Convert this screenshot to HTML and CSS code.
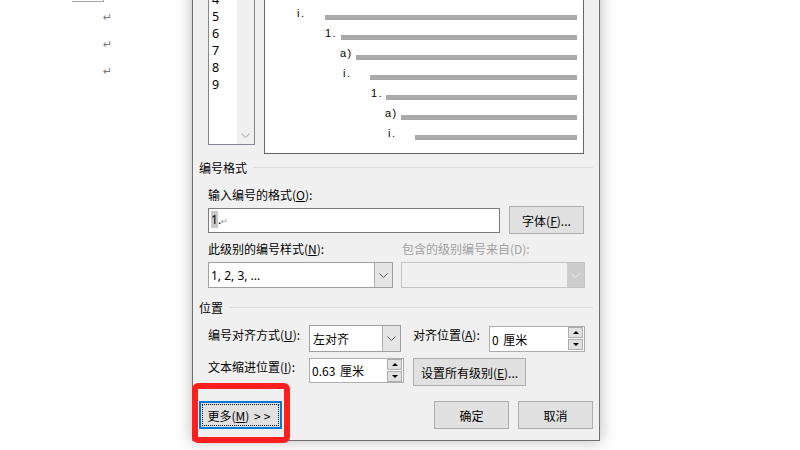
FILE: index.html
```html
<!DOCTYPE html>
<html lang="zh-CN">
<head>
  <meta charset="UTF-8">
  <meta name="viewport" content="width=device-width, initial-scale=1.0">
  <title>定义新多级列表</title>
  <link rel="stylesheet" href="styles.css">
</head>
<body>
  <!-- document page behind the dialog -->
  <div class="doc">
    <div class="cell-corner"></div>
    <p class="para first">&#8629;</p>
    <p class="para">&#8629;</p>
    <p class="para">&#8629;</p>
  </div>

  <div class="dialog">
    <div class="top-row">
      <div class="level-list">
        <ul class="levels">
          <li>4</li>
          <li>5</li>
          <li>6</li>
          <li>7</li>
          <li>8</li>
          <li>9</li>
        </ul>
        <div class="scrollbar">
          <svg width="9" height="5" viewBox="0 0 9 5"><polyline points="0.5,0.5 4.5,4.5 8.5,0.5" fill="none" stroke="#c2c2c2" stroke-width="1.4"/></svg>
        </div>
      </div>

      <div class="preview">
        <div class="pv-row lv3"><span class="pv-num">i.</span><span class="pv-bar"></span></div>
        <div class="pv-row lv4"><span class="pv-num">1.</span><span class="pv-bar"></span></div>
        <div class="pv-row lv5"><span class="pv-num">a)</span><span class="pv-bar"></span></div>
        <div class="pv-row lv6"><span class="pv-num">i.</span><span class="pv-bar"></span></div>
        <div class="pv-row lv7"><span class="pv-num">1.</span><span class="pv-bar"></span></div>
        <div class="pv-row lv8"><span class="pv-num">a)</span><span class="pv-bar"></span></div>
        <div class="pv-row lv9"><span class="pv-num">i.</span><span class="pv-bar"></span></div>
      </div>
    </div>

    <!-- number format -->
    <div class="section">编号格式</div>
    <div class="field-label">输入编号的格式(<u>O</u>):</div>
    <div class="format-row">
      <div class="textbox"><span class="sel">1</span>.<span class="mark">&#8629;</span></div>
      <button class="btn font-btn">字体(<u>F</u>)...</button>
    </div>
    <div class="label-row">
      <span class="style-label">此级别的编号样式(<u>N</u>):</span>
      <span class="disabled">包含的级别编号来自(D):</span>
    </div>
    <div class="select-row">
      <div class="combo style-combo">
        <span class="combo-text">1, 2, 3, ...</span>
        <span class="drop">
          <svg width="9" height="5" viewBox="0 0 9 5"><polyline points="0.5,0.5 4.5,4.5 8.5,0.5" fill="none" stroke="#555" stroke-width="1"/></svg>
        </span>
      </div>
      <div class="combo combo-off">
        <span class="combo-text"></span>
        <span class="drop">
          <svg width="9" height="5" viewBox="0 0 9 5"><polyline points="0.5,0.5 4.5,4.5 8.5,0.5" fill="none" stroke="#e8e8e8" stroke-width="1"/></svg>
        </span>
      </div>
    </div>

    <!-- position -->
    <div class="section pos-section">位置</div>
    <div class="pos-row row-one">
      <span class="pos-label">编号对齐方式(<u>U</u>):</span>
      <div class="combo align-combo">
        <span class="combo-text">左对齐</span>
        <span class="drop">
          <svg width="9" height="5" viewBox="0 0 9 5"><polyline points="0.5,0.5 4.5,4.5 8.5,0.5" fill="none" stroke="#555" stroke-width="1"/></svg>
        </span>
      </div>
      <span class="pos-label at-label">对齐位置(<u>A</u>):</span>
      <div class="spinner at-spin">
        <span class="spin-text">0 厘米</span>
        <span class="spin-btns">
          <span class="spin-btn"><i class="tri-up"></i></span>
          <span class="spin-btn"><i class="tri-down"></i></span>
        </span>
      </div>
    </div>
    <div class="pos-row row-two">
      <span class="pos-label">文本缩进位置(<u>I</u>):</span>
      <div class="spinner indent-spin">
        <span class="spin-text">0.63 厘米</span>
        <span class="spin-btns">
          <span class="spin-btn"><i class="tri-up"></i></span>
          <span class="spin-btn"><i class="tri-down"></i></span>
        </span>
      </div>
      <button class="btn all-btn">设置所有级别(<u>E</u>)...</button>
    </div>

    <div class="bottom-row">
      <div class="more-wrap">
        <button class="btn more-btn">更多(<u>M</u>) <span class="arrows">&gt;&gt;</span></button>
        <div class="highlight"></div>
      </div>
      <button class="btn ok-btn">确定</button>
      <button class="btn cancel-btn">取消</button>
    </div>
  </div>
</body>
</html>
```

FILE: styles.css
```css
body {
  margin: 0;
  height: 450px;
  overflow: hidden;
  display: flex;
  align-items: flex-start;
  background-color: #fff;
  font-family: "Microsoft YaHei UI", "Noto Sans CJK SC", sans-serif;
  font-size: 12px;
  color: #000;
}

/* document behind */
.doc {
  width: 192px;
  flex-shrink: 0;
  padding-left: 72px;
  box-sizing: border-box;
}

.cell-corner {
  width: 31px;
  height: 1px;
  border-bottom: 1px solid #a6a6a6;
  border-right: 1px solid #a6a6a6;
}

.para {
  margin: 0;
  padding-left: 31px;
  line-height: 27px;
  font-family: "DejaVu Sans", sans-serif;
  font-size: 11px;
  color: #7a7a7a;
}

.para.first {
  margin-top: 2px;
}

/* dialog */
.dialog {
  width: 408px;
  flex-shrink: 0;
  box-sizing: border-box;
  margin-top: -81px;
  padding: 0 6px 11px 6px;
  background-color: #f0f0f0;
  border: 1px solid #707070;
  box-shadow: 0 0 14px 1px rgba(0, 0, 0, 0.25);
  display: flex;
  flex-direction: column;
}

.dialog > * {
  flex-shrink: 0;
}

.top-row {
  display: flex;
  align-items: flex-start;
  margin-left: 9px;
  height: 234px;
}

.level-list {
  display: flex;
  width: 47px;
  height: 225px;
  box-sizing: border-box;
  border: 1px solid #828790;
  background-color: #fff;
}

.levels {
  list-style: none;
  margin: 0;
  padding: 70px 0 0 3px;
  width: 28px;
  box-sizing: border-box;
  font-family: "Noto Sans", sans-serif;
  font-size: 12.5px;
  line-height: 17px;
}

.scrollbar {
  width: 17px;
  background-color: #f0f0f0;
  display: flex;
  align-items: flex-end;
  justify-content: center;
  padding-bottom: 6px;
  box-sizing: border-box;
}

.preview {
  margin-left: 9px;
  width: 320px;
  height: 234px;
  box-sizing: border-box;
  border: 1px solid #666;
  background-color: #fff;
  padding: 79px 6px 0 0;
}

.pv-row {
  display: flex;
  align-items: flex-end;
  height: 20px;
}

.pv-num {
  font-family: "Liberation Sans", Arial, sans-serif;
  font-size: 11px;
  line-height: 12px;
  letter-spacing: 1.5px;
  margin-bottom: 1px;
}

.pv-bar {
  flex: 1;
  height: 5px;
  background-color: #a9a9a9;
}

.lv3 { padding-left: 32px; } .lv3 .pv-num { width: 28px; }
.lv4 { padding-left: 60px; } .lv4 .pv-num { width: 16px; }
.lv5 { padding-left: 75px; } .lv5 .pv-num { width: 16px; }
.lv6 { padding-left: 78px; } .lv6 .pv-num { width: 27px; }
.lv7 { padding-left: 106px; } .lv7 .pv-num { width: 15px; }
.lv8 { padding-left: 120px; } .lv8 .pv-num { width: 16px; }
.lv9 { padding-left: 123px; } .lv9 .pv-num { width: 27px; }

/* sections */
.section {
  display: flex;
  align-items: center;
  margin-top: 7px;
  line-height: 14px;
  height: 14px;
}

.section::after {
  content: "";
  flex: 1;
  margin: -2px 0 0 6px;
  border-top: 1px solid #dcdcdc;
}

.pos-section {
  margin-top: 13px;
}

.field-label {
  margin: 13px 0 0 9px;
  line-height: 14px;
}

u {
  text-underline-offset: 1px;
}

.format-row {
  display: flex;
  align-items: center;
  height: 28px;
  margin: 4px 0 0 9px;
}

.textbox {
  width: 292px;
  height: 25px;
  box-sizing: border-box;
  border: 1px solid #7a7a7a;
  background-color: #fff;
  padding: 3px 0 0 2px;
  line-height: 15px;
  font-family: "Noto Sans", sans-serif;
}

.textbox .sel {
  background-color: #c8c8c8;
}

.textbox .mark {
  font-family: "DejaVu Sans", sans-serif;
  font-size: 8px;
  color: #8a8a8a;
}

.btn {
  font: inherit;
  color: #000;
  background-color: #e1e1e1;
  border: 1px solid #adadad;
  padding: 0;
  height: 28px;
  box-sizing: border-box;
  cursor: pointer;
}

.btn:hover {
  background-color: #e5f1fb;
  border-color: #0078d7;
}

.font-btn {
  margin-left: 9px;
  width: 75px;
}

.label-row {
  display: flex;
  margin: 8px 0 0 9px;
  line-height: 14px;
  height: 14px;
}

.style-label {
  width: 194px;
}

.disabled {
  color: #a0a0a0;
}

.select-row {
  display: flex;
  margin: 6px 0 0 9px;
  height: 26px;
}

.combo {
  display: flex;
  box-sizing: border-box;
  border: 1px solid #a0a0a0;
  background-color: #fff;
}

.combo-text {
  flex: 1;
  display: flex;
  align-items: center;
  padding-left: 2px;
}

.drop {
  width: 17px;
  display: flex;
  align-items: center;
  justify-content: center;
  background-color: #e5e5e5;
  border-left: 1px solid #adadad;
}

.style-combo {
  width: 185px;
  height: 26px;
  font-family: "Noto Sans", "Noto Sans CJK SC", sans-serif;
}

.combo-off {
  margin-left: 8px;
  width: 184px;
  height: 26px;
  border-color: #c4c4c4;
  background-color: #f0f0f0;
}

.combo-off .drop {
  background-color: #cccccc;
  border-left: none;
}

.pos-row {
  display: flex;
  align-items: flex-start;
  margin-left: 9px;
}

.row-one {
  margin-top: 10px;
  height: 27px;
}

.row-two {
  margin-top: 6px;
  height: 28px;
}

.pos-label {
  width: 101px;
  line-height: 14px;
  margin-top: 3px;
}

.row-two .pos-label {
  margin-top: 2px;
}

.align-combo {
  width: 92px;
  height: 27px;
}

.align-combo .combo-text {
  padding-left: 3px;
}

.at-label {
  width: 76px;
  margin-left: 12px;
}

.spinner {
  display: flex;
  box-sizing: border-box;
  border: 1px solid #adadad;
  background-color: #fff;
}

.spin-text {
  flex: 1;
  display: flex;
  align-items: center;
  padding-left: 2px;
  word-spacing: 2px;
}

.spin-btns {
  display: flex;
  flex-direction: column;
  gap: 1px;
  padding-right: 1px;
}

.spin-btn {
  width: 15px;
  height: 11px;
  box-sizing: border-box;
  background-color: #e1e1e1;
  border: 1px solid #adadad;
  display: flex;
  align-items: center;
  justify-content: center;
}

.tri-up {
  width: 0;
  height: 0;
  border-left: 3px solid transparent;
  border-right: 3px solid transparent;
  border-bottom: 3px solid #000;
}

.tri-down {
  width: 0;
  height: 0;
  border-left: 3px solid transparent;
  border-right: 3px solid transparent;
  border-top: 3px solid #000;
}

.at-spin {
  width: 96px;
  height: 26px;
  margin-top: 1px;
}

.indent-spin {
  width: 95px;
  height: 25px;
}

.all-btn {
  margin-left: 9px;
  width: 113px;
}

/* bottom buttons */
.bottom-row {
  display: flex;
  margin-top: 15px;
  height: 28px;
}

.more-wrap {
  position: relative;
}

.more-btn {
  width: 83px;
  border: 2px solid #0078d7;
  outline: 1px dotted #000;
  outline-offset: -4px;
}

.arrows {
  letter-spacing: 3px;
  margin-left: 2px;
}

.highlight {
  position: absolute;
  left: -7px;
  top: -18px;
  width: 98px;
  height: 60px;
  box-sizing: border-box;
  border: 6px solid #ff1f1f;
  border-radius: 6px;
  pointer-events: none;
}

.ok-btn {
  margin-left: auto;
  width: 75px;
}

.cancel-btn {
  margin-left: 9px;
  width: 75px;
}
```
